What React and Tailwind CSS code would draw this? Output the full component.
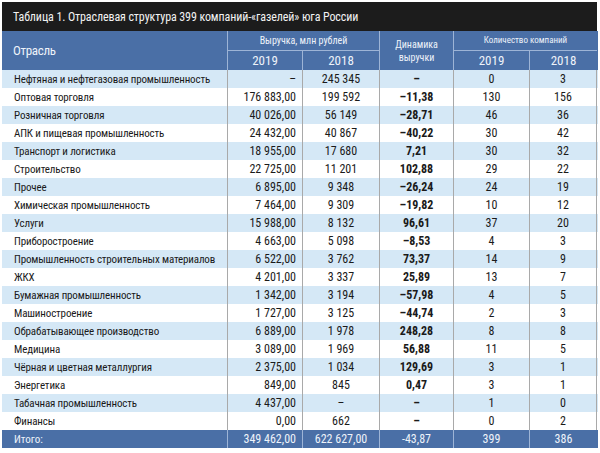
const rows = [
  ['Нефтяная и нефтегазовая промышленность', '–', '245 345', '–', '0', '3'],
  ['Оптовая торговля', '176 883,00', '199 592', '–11,38', '130', '156'],
  ['Розничная торговля', '40 026,00', '56 149', '–28,71', '46', '36'],
  ['АПК и пищевая промышленность', '24 432,00', '40 867', '–40,22', '30', '42'],
  ['Транспорт и логистика', '18 955,00', '17 680', '7,21', '30', '32'],
  ['Строительство', '22 725,00', '11 201', '102,88', '29', '22'],
  ['Прочее', '6 895,00', '9 348', '–26,24', '24', '19'],
  ['Химическая промышленность', '7 464,00', '9 309', '–19,82', '10', '12'],
  ['Услуги', '15 988,00', '8 132', '96,61', '37', '20'],
  ['Приборостроение', '4 663,00', '5 098', '–8,53', '4', '3'],
  ['Промышленность строительных материалов', '6 522,00', '3 762', '73,37', '14', '9'],
  ['ЖКХ', '4 201,00', '3 337', '25,89', '13', '7'],
  ['Бумажная промышленность', '1 342,00', '3 194', '–57,98', '4', '5'],
  ['Машиностроение', '1 727,00', '3 125', '–44,74', '2', '3'],
  ['Обрабатывающее производство', '6 889,00', '1 978', '248,28', '8', '8'],
  ['Медицина', '3 089,00', '1 969', '56,88', '11', '5'],
  ['Чёрная и цветная металлургия', '2 375,00', '1 034', '129,69', '3', '1'],
  ['Энергетика', '849,00', '845', '0,47', '3', '1'],
  ['Табачная промышленность', '4 437,00', '–', '–', '1', '0'],
  ['Финансы', '0,00', '662', '–', '0', '2'],
]

const cols = 'grid grid-cols-[225px_75px_77px_74px_76px_68px]'
const font = { fontFamily: '"Liberation Sans Narrow", "Roboto Condensed", Roboto, sans-serif' }

export default function App() {
  return (
    <div className="w-[600px] h-[453px] bg-white pt-[2px] px-[2px] text-[#1a1a1a]" style={font}>
      <div className="w-[595px] h-[29px] bg-[#1c1c1c] text-[#f2f2f2] text-[12px] tracking-[-0.1px] flex items-center pl-[11px]">
        Таблица 1. Отраслевая структура 399 компаний-«газелей» юга России
      </div>

      {/* Header */}
      <div className={`${cols} grid-rows-[20px_19px] bg-[#4a6fa6] text-[#eef3fa]`}>
        <div className="row-span-2 flex items-center pl-[11px] text-[13px] tracking-[-0.3px]">Отрасль</div>
        <div className="col-span-2 flex items-center justify-center text-[10px] border-l border-[#9db4d6] border-b">Выручка, млн рублей</div>
        <div className="row-span-2 flex flex-col items-center justify-center text-[10px] leading-[13px] border-l border-[#9db4d6]">
          <span>Динамика</span>
          <span>выручки</span>
        </div>
        <div className="col-span-2 flex items-center justify-center text-[9px] border-l border-[#9db4d6] border-b">Количество компаний</div>
        <div className="flex items-center justify-center text-[13px] border-l border-[#9db4d6]">2019</div>
        <div className="flex items-center justify-center text-[13px] border-l border-[#9db4d6]">2018</div>
        <div className="flex items-center justify-center text-[13px] border-l border-[#9db4d6]">2019</div>
        <div className="flex items-center justify-center text-[13px] border-l border-[#9db4d6]">2018</div>
      </div>

      {/* Body */}
      {rows.map((r, i) => (
        <div key={r[0]} className={`${cols} h-[18px] text-[12px] leading-none ${i % 2 === 0 ? 'bg-[#d5e8f6]' : 'bg-white'}`}>
          <div className="flex items-center pl-[12px] whitespace-nowrap text-[11px] tracking-[-0.15px]">{r[0]}</div>
          <div className="flex items-center justify-end pr-[6px] border-l border-[#a9a9a9]">{r[1]}</div>
          <div className="flex items-center justify-center border-l border-[#a9a9a9]">{r[2]}</div>
          <div className="flex items-center justify-center font-bold border-l border-[#a9a9a9]">{r[3]}</div>
          <div className="flex items-center justify-center border-l border-[#a9a9a9]">{r[4]}</div>
          <div className="flex items-center justify-center border-l border-r border-[#a9a9a9]">{r[5]}</div>
        </div>
      ))}

      {/* Total */}
      <div className={`${cols} h-[18px] text-[12px] leading-none bg-[#4a6fa6] text-[#eef3fa]`}>
        <div className="flex items-center pl-[12px] text-[11px]">Итого:</div>
        <div className="flex items-center justify-end pr-[6px] border-l border-[#9db4d6]">349 462,00</div>
        <div className="flex items-center justify-center border-l border-[#9db4d6]">622 627,00</div>
        <div className="flex items-center justify-center border-l border-[#9db4d6]">-43,87</div>
        <div className="flex items-center justify-center border-l border-[#9db4d6]">399</div>
        <div className="flex items-center justify-center border-l border-[#9db4d6]">386</div>
      </div>
    </div>
  )
}
